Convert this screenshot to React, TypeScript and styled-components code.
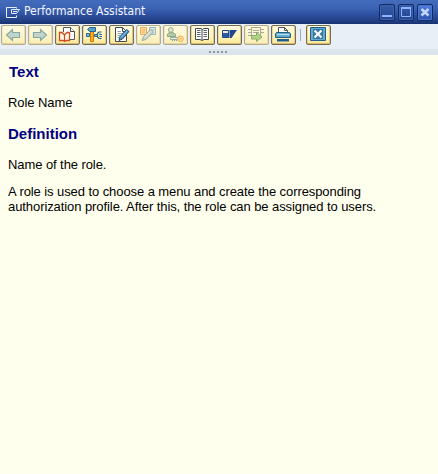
import React from "react";
import styled, { createGlobalStyle } from "styled-components";

const GlobalStyle = createGlobalStyle`
  * { box-sizing: border-box; }
  html, body { margin: 0; padding: 0; overflow: hidden; }
  body { background: #ffffee; }
`;

const Window = styled.div`
  display: flex;
  flex-direction: column;
  width: 438px;
  height: 474px;
  background: #ffffee;
  font-family: "Liberation Sans", Arial, sans-serif;
`;

const TitleBar = styled.header`
  display: flex;
  align-items: center;
  flex: none;
  height: 24px;
  padding: 0 5px 0 6px;
  background: linear-gradient(#446cbd 0%, #3d64b5 30%, #2d50a0 62%, #1f3c80 90%, #18316e 100%);
`;

const Title = styled.h1`
  flex: 1;
  margin: -2px 0 0 3px;
  color: #f4f7ff;
  font: 400 12px/16px "DejaVu Sans Condensed", "DejaVu Sans", sans-serif;
  letter-spacing: 0.02px;
  white-space: nowrap;
`;

const WindowControls = styled.div`
  display: flex;
  gap: 3px;
  margin-top: 1px;
`;

const ControlButton = styled.button<{ $bright?: boolean }>`
  display: block;
  width: 16px;
  height: 17px;
  padding: 0;
  border: 1px solid #142b62;
  border-radius: 2px;
  background: ${(p) =>
    p.$bright ? "linear-gradient(#4f7de0, #2c53a8)" : "linear-gradient(#355caa, #24468f)"};
  box-shadow: inset 0 0 0 1px ${(p) => (p.$bright ? "#4a74cb" : "#3c62b0")};

  svg { display: block; }
`;

const Toolbar = styled.nav`
  display: flex;
  align-items: flex-start;
  flex: none;
  gap: 2px;
  height: 25px;
  padding: 1px 0 0 1px;
  background: #e8eff7;
`;

const ToolButton = styled.button<{ $disabled?: boolean }>`
  display: block;
  flex: none;
  width: 25px;
  height: 20px;
  padding: 0;
  border: 1px solid ${(p) => (p.$disabled ? "#b5ac8b" : "#766c50")};
  border-radius: 2px;
  background: ${(p) =>
    p.$disabled
      ? "linear-gradient(#fefbe2, #fcf4c8 60%, #faeeb6)"
      : "linear-gradient(#fffbe0, #fff3bd 55%, #fde795)"};
  box-shadow:
    inset 0 -1px ${(p) => (p.$disabled ? "#e4d5a0" : "#d2b974")},
    inset -1px 0 ${(p) => (p.$disabled ? "#ebddab" : "#dfc882")},
    inset 1px 0 ${(p) => (p.$disabled ? "#f3e8ba" : "#ecd893")};

  svg { display: block; }
`;

const Separator = styled.span`
  width: 1px;
  height: 12px;
  margin: 4px 3px 0 2px;
  background: #a3a9b2;
`;

const Splitter = styled.div`
  display: flex;
  justify-content: center;
  flex: none;
  gap: 2px;
  height: 6px;
  padding: 2px 2px 0 0;
  background: #dae4ea;
`;

const GripDot = styled.i`
  width: 2px;
  height: 2px;
  background: #8b97a4;
`;

const Document = styled.main`
  flex: 1;
  padding: 9px 8px 0;
  color: #000;
  font-size: 13px;
  line-height: 15px;
  letter-spacing: -0.08px;
`;

const Heading = styled.h2<{ $indent?: number }>`
  margin: 0 0 15px ${(p) => p.$indent ?? 0}px;
  color: #000080;
  font-size: 15px;
  line-height: 16px;
  letter-spacing: 0;
`;

const Paragraph = styled.p<{ $gap: number }>`
  margin: 0 0 ${(p) => p.$gap}px;
  white-space: nowrap;
`;

const Glyph = ({ children }: { children: React.ReactNode }) => (
  <svg width="23" height="18" viewBox="0 0 23 18" fill="none">{children}</svg>
);

const ArrowLeft = () => (
  <Glyph>
    <path d="M4.5 9 10.5 3.5V6.5H17.5V11.5H10.5V14.5Z" fill="#c3d5c8" stroke="#84a9a5" strokeWidth="1.2" />
  </Glyph>
);

const ArrowRight = () => (
  <Glyph>
    <path d="M17.5 9 11.5 3.5V6.5H4.5V11.5H11.5V14.5Z" fill="#c3d5c8" stroke="#84a9a5" strokeWidth="1.2" />
  </Glyph>
);

const BookPage = () => (
  <Glyph>
    <path d="M7.5 6V1.5H14.5L18.5 5.5V13.5H14" fill="#fff" stroke="#55585b" />
    <path d="M14.5 1.5V5.5H18.5" fill="#fff" stroke="#45484b" />
    <path d="M3.5 6.5H6L8.5 9 11 6.5H13.5V14.5H10L8.5 15.5 7 14.5H3.5Z" fill="#fff8ea" stroke="#cf4a1e" strokeWidth="1.3" />
    <path d="M8.5 8.5V15" stroke="#cf4a1e" strokeWidth="1.2" />
  </Glyph>
);

const Tools = () => (
  <Glyph>
    <path d="M3.5 7.5H6.5V10.5H3.5ZM11.5 8.5H14.5V10.5H11.5Z" fill="#8bbfd6" stroke="#24658f" />
    <path d="M18.5 6H16L14.5 7.5V11L16 12.5H18.5M17 7.5V8.5H19M17 11V10.5H19" stroke="#24658f" strokeWidth="1.2" />
    <path d="M7.5 5.5H10.5V15.5H7.5Z" fill="#ffab1c" stroke="#cc7811" />
    <path d="M4.5 3.5 6.5 1.5H12.5V5.5H6.5Z" fill="#5b9fc4" stroke="#24658f" />
  </Glyph>
);

const EditPage = () => (
  <Glyph>
    <path d="M5.5 1.5H12.5L16.5 5.5V15.5H5.5Z" fill="#fff" stroke="#45484b" />
    <path d="M12.5 1.5V5.5H16.5" stroke="#45484b" />
    <path d="M7.5 5.5H11M7.5 7.5H12M7.5 9.5H10M7.5 11.5H9" stroke="#999ca0" />
    <path d="M9 14.5 10 10.5 16.5 3.5 19 5.5 12.5 13Z" fill="#4d93bd" stroke="#1f5278" />
    <path d="M11 11.5 17.2 4.8" stroke="#92c6df" />
  </Glyph>
);

const EditNotes = () => (
  <Glyph>
    <path d="M3.5 1.5H9.5V8.5H3.5Z" fill="#fee08d" stroke="#f0a870" />
    <path d="M12.5 1.5H18.5V8.5H12.5Z" fill="#e4e9d4" stroke="#91b8c0" />
    <path d="M5 4H8M5 6H8" stroke="#f0a870" />
    <path d="M14 4H17" stroke="#91b8c0" />
    <path d="M5 14.5 6.5 10.5 13.5 3.5 16.5 6 9 13.5Z" fill="#c5d5cf" stroke="#a0a89f" />
    <path d="M7.5 11.5 14.2 5" stroke="#edf0dc" />
  </Glyph>
);

const UserKey = () => (
  <Glyph>
    <circle cx="6.8" cy="3.9" r="2.4" fill="#e6e5c6" stroke="#9cab93" />
    <path d="M3.5 10.5V8L5 6.7H9L11.5 8.2V10.5Z" fill="#b4cca6" stroke="#8daa85" />
    <path d="M14 11.5H6.5V13.5H14" fill="#f6efd0" stroke="#96aaa6" />
    <path d="M8 14.5H9M10 14.5H11M12 14.5H13" stroke="#899e9b" />
    <circle cx="16.5" cy="12.8" r="2.8" fill="#fbe09a" stroke="#e9ae61" />
    <path d="M15.8 12.8H17.2" stroke="#c99a55" />
  </Glyph>
);

const OpenBook = () => (
  <Glyph>
    <path d="M4.5 2.5H10L11.5 3.5 13 2.5H17.5V13.5H13L11 14.5 9 13.5H4.5Z" fill="#fff" stroke="#45484b" />
    <path d="M11 3V14" stroke="#45484b" />
    <path d="M6 4.5H9.5M6 6.5H9.5M6 8.5H9.5M6 10.5H9.5M12.5 4.5H16M12.5 6.5H16M12.5 8.5H16M12.5 10.5H16" stroke="#65686b" />
  </Glyph>
);

const BlueFlag = () => (
  <Glyph>
    <path d="M4.5 4.5H10.5V11.5H4.5Z" fill="#2a5aa5" stroke="#20498c" />
    <path d="M5 5H10V7H5Z" fill="#e9eadb" />
    <path d="M11.5 4H19L13.5 12H11.5Z" fill="#20498c" />
  </Glyph>
);

const ExportPage = () => (
  <Glyph>
    <path d="M6.5 1.5H15.5V11.5H6.5Z" fill="#fbf7d9" stroke="#aaa990" />
    <path d="M8 4.5H14M8 6.5H14M3 3.5H6M3 6.5H6M3 9.5H6M16 3.5H19M16 6.5H19" stroke="#aaa990" />
    <path d="M6.5 9.5H11.5V6.5L17 11 11.5 15.5V13H6.5Z" fill="#b5d385" stroke="#82ad6d" />
  </Glyph>
);

const Printer = () => (
  <Glyph>
    <path d="M6.5 7V1.5H12.5L15.5 4.5V7" fill="#fff" stroke="#515457" />
    <path d="M12.5 1.5V4.5H15.5" stroke="#515457" />
    <path d="M4.5 6.5H17.5L18.5 8V11.5H3.5V8Z" fill="#65a9cb" stroke="#205f8c" />
    <path d="M5 8.5H17" stroke="#b9dfed" />
    <path d="M5 13H17V15.5H5Z" fill="#205f8c" />
  </Glyph>
);

const ClosePanel = () => (
  <Glyph>
    <path d="M3.5 1.5H18.5V14.5H3.5Z" fill="#69a8c7" stroke="#205f8c" />
    <path d="M6.5 3.5H15.5V12.5H6.5Z" fill="#397fa9" stroke="#2c739f" />
    <path d="M7.5 4.5 14.5 11.5M14.5 4.5 7.5 11.5" stroke="#fff" strokeWidth="2" />
  </Glyph>
);

const WindowIcon = () => (
  <svg width="15" height="13" viewBox="0 0 15 13" fill="none">
    <path d="M10.5 9.5V11.5H.5V1.5H10.5V2.5M13.5 3.5H5.5V7.5H10.5L13.5 3.5M7 5.5H11" stroke="#e6edff" />
  </svg>
);

const tools = [
  { label: "Back", Icon: ArrowLeft, disabled: true },
  { label: "Forward", Icon: ArrowRight, disabled: true },
  { label: "Application Help", Icon: BookPage },
  { label: "Technical Information", Icon: Tools },
  { label: "Edit", Icon: EditPage },
  { label: "Edit Notes", Icon: EditNotes, disabled: true },
  { label: "Authorizations", Icon: UserKey, disabled: true },
  { label: "Glossary", Icon: OpenBook },
  { label: "SAP", Icon: BlueFlag },
  { label: "Export", Icon: ExportPage, disabled: true },
  { label: "Print", Icon: Printer },
];

export default function App() {
  return (
    <>
      <GlobalStyle />
      <Window>
        <TitleBar>
          <WindowIcon />
          <Title>Performance Assistant</Title>
          <WindowControls>
            <ControlButton aria-label="Minimize">
              <svg width="14" height="15"><path d="M2 10H12V12H2Z" fill="#8fb3ff" /></svg>
            </ControlButton>
            <ControlButton aria-label="Maximize">
              <svg width="14" height="15" fill="none"><path d="M2.5 2.5H11.5V11.5H2.5Z" stroke="#8fb3ff" /><path d="M2 3H12" stroke="#8fb3ff" strokeWidth="2" /></svg>
            </ControlButton>
            <ControlButton $bright aria-label="Close">
              <svg width="14" height="15"><path d="M3.5 4 10.5 10.5M10.5 4 3.5 10.5" stroke="#c3d6ff" strokeWidth="2.5" /></svg>
            </ControlButton>
          </WindowControls>
        </TitleBar>
        <Toolbar>
          {tools.map(({ label, Icon, disabled }) => (
            <ToolButton key={label} aria-label={label} $disabled={disabled}><Icon /></ToolButton>
          ))}
          <Separator />
          <ToolButton aria-label="Close Performance Assistant"><ClosePanel /></ToolButton>
        </Toolbar>
        <Splitter><GripDot /><GripDot /><GripDot /><GripDot /><GripDot /></Splitter>
        <Document>
          <Heading $indent={1}>Text</Heading>
          <Paragraph $gap={16}>Role Name</Paragraph>
          <Heading>Definition</Heading>
          <Paragraph $gap={12}>Name of the role.</Paragraph>
          <Paragraph $gap={0}>
            A role is used to choose a menu and create the corresponding<br />
            authorization profile. After this, the role can be assigned to users.
          </Paragraph>
        </Document>
      </Window>
    </>
  );
}
